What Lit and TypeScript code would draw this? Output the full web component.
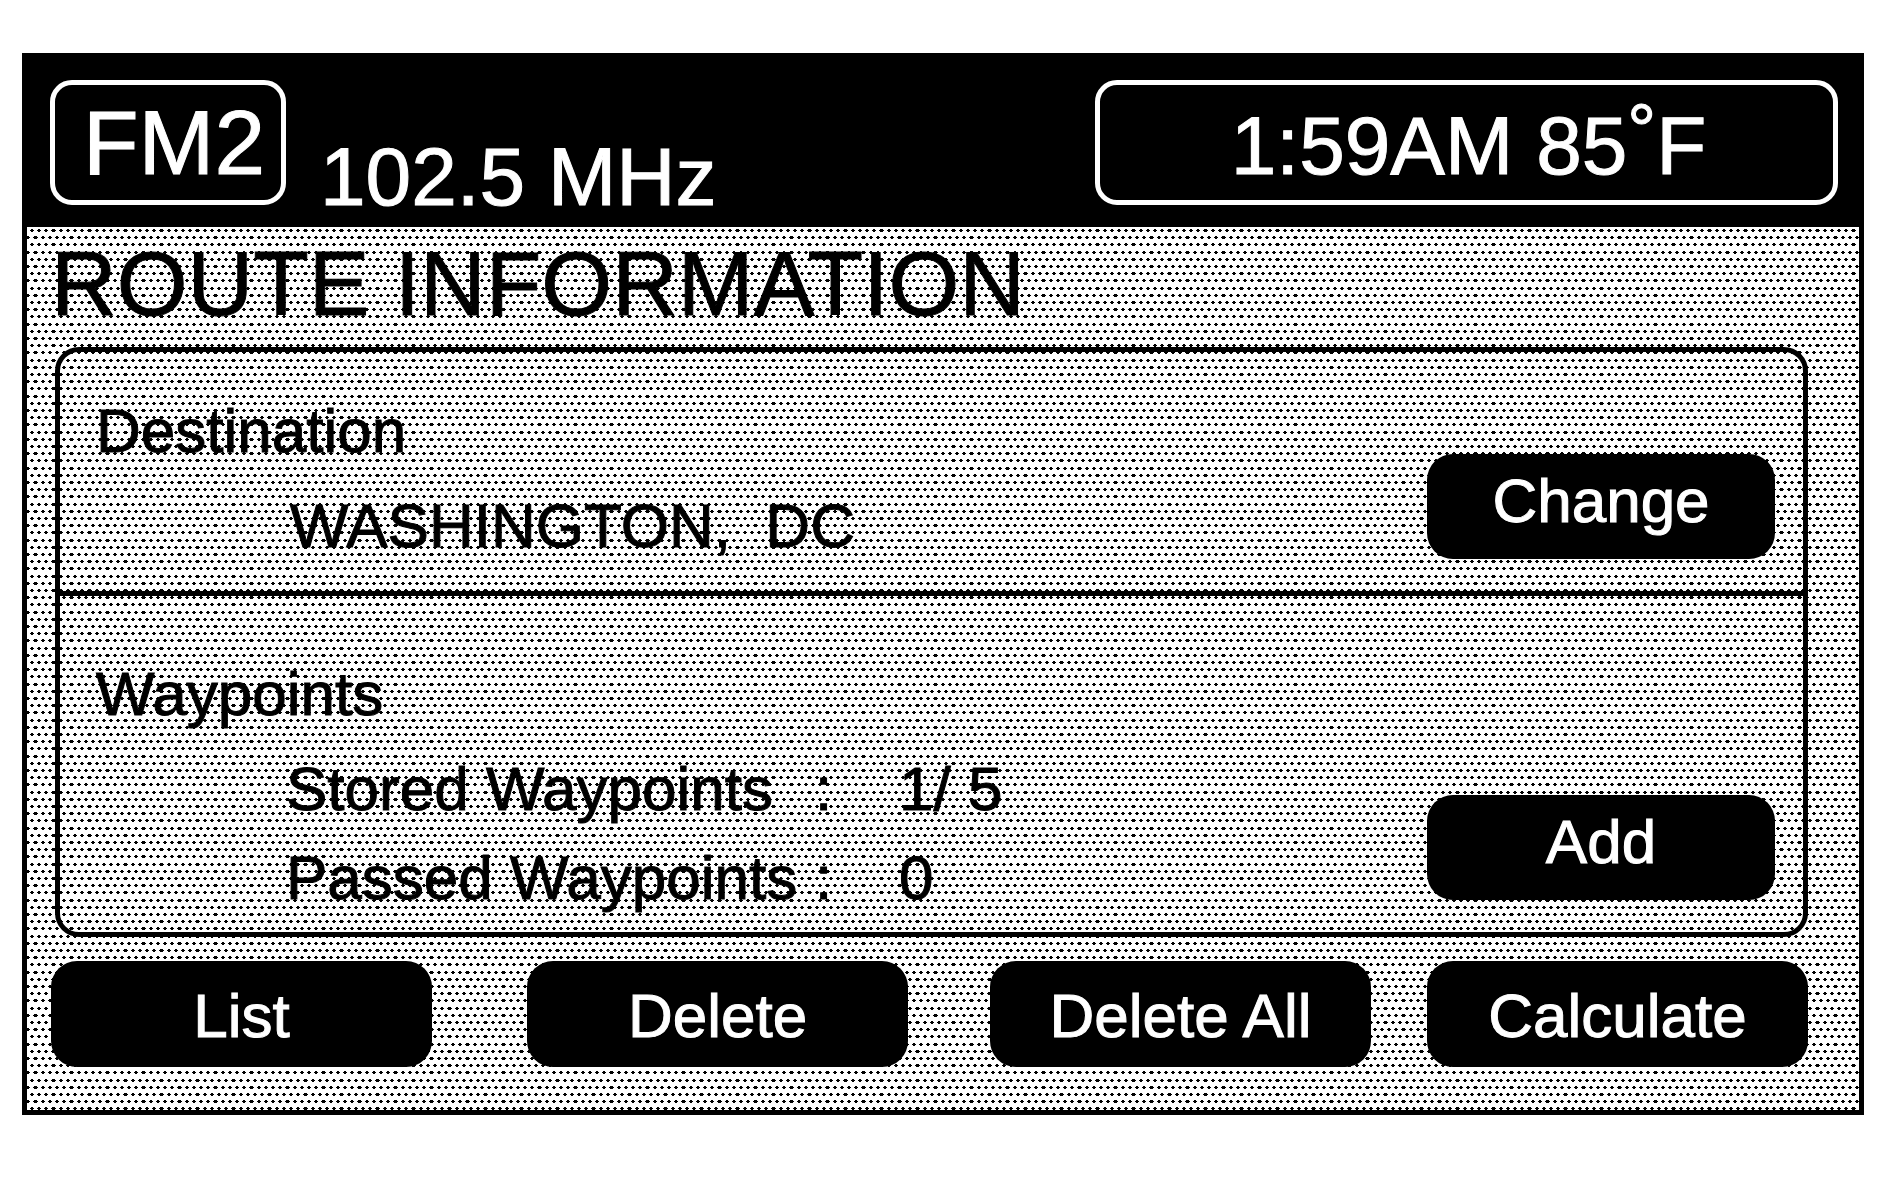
import { LitElement, html, css, unsafeCSS } from "lit";
import { customElement } from "lit/decorators.js";

/** One halftone dot: a one-pixel bar with a narrower, taller core. */
const dot = (x: number, y: number, wide = false): string =>
  `M${x - 2} ${y}h${wide ? 5 : 4}v1h-${wide ? 5 : 4}z` +
  `M${x - 1} ${y - 1}h${wide ? 3 : 2}v3h-${wide ? 3 : 2}z`;

/** Staggered rows of dots; the 36 by 72 tile repeats seamlessly. */
const halftone = (): string => {
  const rows = [3, 10, 17, 25, 32, 39, 46, 53, 61, 68];
  const path = rows
    .map((y, i) =>
      i % 2 === 0
        ? [-2, 5, 12, 19, 34].map((x) => dot(x, y)).join("") + dot(26, y, true)
        : [1, 16, 23, 30, 37].map((x) => dot(x, y)).join("") + dot(8, y, true)
    )
    .join("");
  const image =
    `<svg xmlns="http://www.w3.org/2000/svg" width="36" height="72" ` +
    `shape-rendering="crispEdges"><path d="${path}"/></svg>`;
  return `url("data:image/svg+xml,${encodeURIComponent(image)}")`;
};

@customElement("app-root")
export class AppRoot extends LitElement {
  static styles = css`
    :host {
      display: block;
      box-sizing: border-box;
      min-height: 100vh;
      padding: 53px 23px 53px 22px;
      background: #fff;
      color: #000;
      font-family: "Liberation Sans", Arial, Helvetica, sans-serif;
      font-size: 62px;
      line-height: 72px;
      -webkit-text-stroke: 1px currentColor;
    }
    * {
      box-sizing: border-box;
    }
    h1,
    h2,
    p,
    dl,
    dd,
    dt {
      margin: 0;
      font-weight: 400;
      font-size: inherit;
    }
    .status {
      display: flex;
      align-items: flex-start;
      min-height: 174px;
      padding: 27px 26px 10px 28px;
      background: #000;
      color: #fff;
      font-size: 82px;
      line-height: 80px;
    }
    .box {
      display: flex;
      align-items: center;
      justify-content: center;
      height: 125px;
      border: 5px solid #fff;
      border-radius: 22px;
    }
    .band {
      width: 236px;
      padding-left: 12px;
      font-size: 91px;
    }
    .station {
      align-self: flex-end;
      margin-left: 34px;
    }
    .clock {
      flex: 0 1 743px;
      margin-left: auto;
      padding: 6px 0 0 4px;
      white-space: nowrap;
    }
    .degree {
      font-size: 72px;
      line-height: 0;
      vertical-align: 20px;
    }
    .body {
      border: solid #000;
      border-width: 0 5px 5px;
      padding: 7px 51px 43px 24px;
      background: ${unsafeCSS(halftone())} padding-box;
    }
    .title {
      font-size: 91px;
      line-height: 100px;
    }
    .panel {
      margin: 13px 0 24px 4px;
      border: 5px solid #000;
      border-radius: 24px;
    }
    .section {
      display: flex;
      align-items: flex-end;
      justify-content: space-between;
      padding: 0 28px 0 36px;
    }
    .section + .section {
      border-top: 5px solid #000;
    }
    .info {
      display: grid;
      gap: 23px;
    }
    .destination .info {
      padding: 43px 0 29px;
    }
    .waypoints .info {
      padding: 62px 0 18px;
    }
    .value {
      padding-left: 194px;
      white-space: pre;
    }
    .stats {
      display: grid;
      gap: 17px;
      padding-left: 190px;
    }
    .stat {
      display: grid;
      grid-template-columns: 529px 84px auto;
    }
    .button {
      width: 381px;
      height: 106px;
      padding: 4px 0 0;
      border: 0;
      border-radius: 26px;
      background: #000;
      color: #fff;
      font: inherit;
      cursor: pointer;
    }
    .side {
      width: 348px;
      height: 105px;
      margin-bottom: 32px;
      padding: 0 0 12px;
    }
    .actions {
      display: grid;
      grid-template-columns: 476fr 463fr 437fr 381fr;
    }
  `;

  render() {
    return html`
      <header class="status">
        <div class="box band">FM2</div>
        <div class="station">102.5 MHz</div>
        <div class="box clock">
          <span>1:59AM 85<sup class="degree">°</sup>F</span>
        </div>
      </header>
      <main class="body">
        <h1 class="title">ROUTE INFORMATION</h1>
        <div class="panel">
          <section class="section destination">
            <div class="info">
              <h2>Destination</h2>
              <p class="value">WASHINGTON,  DC</p>
            </div>
            <button class="button side" type="button">Change</button>
          </section>
          <section class="section waypoints">
            <div class="info">
              <h2>Waypoints</h2>
              <dl class="stats">
                <div class="stat">
                  <dt>Stored Waypoints</dt>
                  <span>:</span>
                  <dd>1/ 5</dd>
                </div>
                <div class="stat">
                  <dt>Passed Waypoints</dt>
                  <span>:</span>
                  <dd>0</dd>
                </div>
              </dl>
            </div>
            <button class="button side" type="button">Add</button>
          </section>
        </div>
        <nav class="actions">
          <button class="button" type="button">List</button>
          <button class="button" type="button">Delete</button>
          <button class="button" type="button">Delete All</button>
          <button class="button" type="button">Calculate</button>
        </nav>
      </main>
    `;
  }
}
